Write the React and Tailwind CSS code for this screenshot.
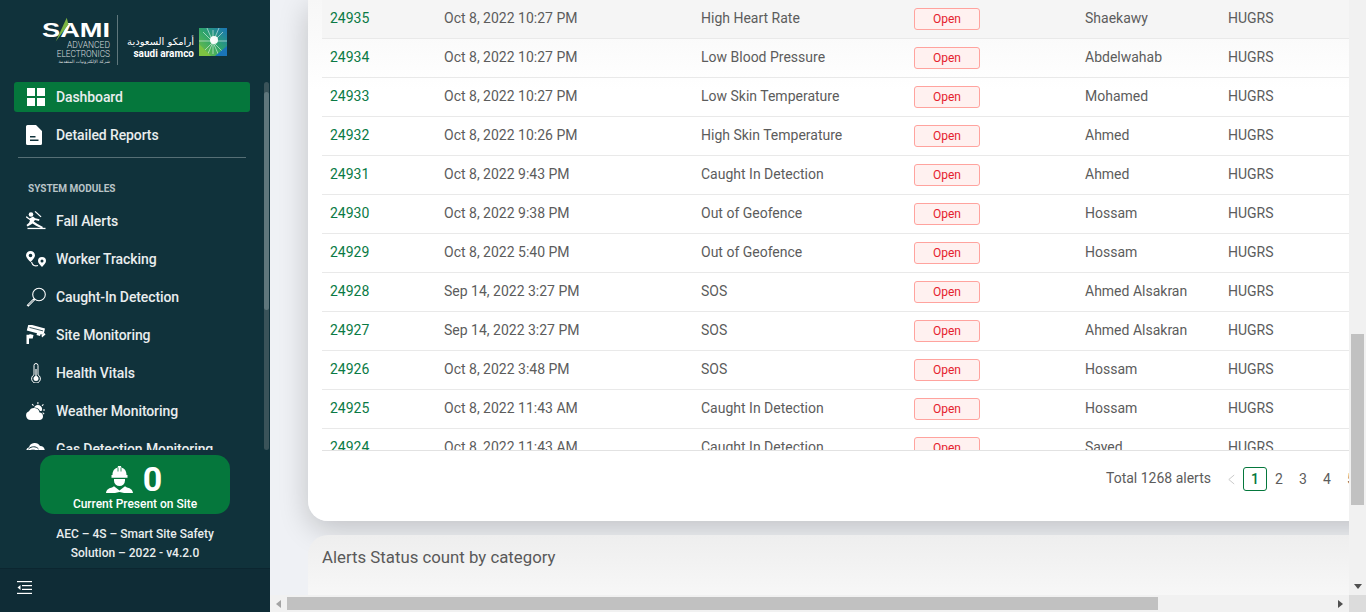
import React from "react";

const rows = [
  ["24935", "Oct 8, 2022 10:27 PM", "High Heart Rate", "Shaekawy"],
  ["24934", "Oct 8, 2022 10:27 PM", "Low Blood Pressure", "Abdelwahab"],
  ["24933", "Oct 8, 2022 10:27 PM", "Low Skin Temperature", "Mohamed"],
  ["24932", "Oct 8, 2022 10:26 PM", "High Skin Temperature", "Ahmed"],
  ["24931", "Oct 8, 2022 9:43 PM", "Caught In Detection", "Ahmed"],
  ["24930", "Oct 8, 2022 9:38 PM", "Out of Geofence", "Hossam"],
  ["24929", "Oct 8, 2022 5:40 PM", "Out of Geofence", "Hossam"],
  ["24928", "Sep 14, 2022 3:27 PM", "SOS", "Ahmed Alsakran"],
  ["24927", "Sep 14, 2022 3:27 PM", "SOS", "Ahmed Alsakran"],
  ["24926", "Oct 8, 2022 3:48 PM", "SOS", "Hossam"],
  ["24925", "Oct 8, 2022 11:43 AM", "Caught In Detection", "Hossam"],
  ["24924", "Oct 8, 2022 11:43 AM", "Caught In Detection", "Sayed"],
];

const Svg = ({ children, className = "w-5 h-5" }) => (
  <svg viewBox="0 0 20 20" className={className} fill="none" stroke="none">{children}</svg>
);

const IconDash = () => (
  <Svg><g fill="#fff"><rect x="1" y="1" width="8" height="8" /><rect x="11" y="1" width="8" height="8" /><rect x="1" y="11" width="8" height="8" /><rect x="11" y="11" width="8" height="8" /></g></Svg>
);
const IconFile = () => (
  <Svg><path fill="#fff" fillRule="evenodd" d="M1.500 0H10l6 6v12.500a1.500 1.500 0 0 1-1.500 1.500h-13A1.500 1.500 0 0 1 0 18.500V1.500A1.500 1.500 0 0 1 1.500 0ZM4 11v1.500h5.500V11ZM4 14.500V16h8.500v-1.500Z" /></Svg>
);
const IconFall = () => (
  <Svg>
    <g fill="#fff">
      <circle cx="5" cy="3.500" r="2.300" />
      <path d="M.5 5 3.500 7.500l3.500-2 2.200 1.700 4.300 1-.5 1.700-4-.8-1.300 1.400 3.800 2.500 5.500 3-1 1.500-6-2.800-3.500-2.300L5 13.500 1.500 15.500l-1-1.500 2.600-2.200.9-2.500L0 6.500Z" />
      <path d="M9.500 0l6 5.500-.9.800-6-5.500Z" />
      <rect x="1.500" y="16.800" width="18" height="1.300" />
    </g>
  </Svg>
);
const IconRoute = () => (
  <Svg>
    <path stroke="#fff" strokeWidth="1.100" d="M5.500 13c1 3.500 3.500 4.500 6.500 3.500" />
    <path fill="#fff" fillRule="evenodd" d="M4.500 2a4.500 4.500 0 0 1 4.500 4.500c0 2-2.500 4.700-4.500 6.500C2.500 11.200 0 8.500 0 6.500A4.500 4.500 0 0 1 4.500 2Zm0 2.700a1.800 1.800 0 1 0 0 3.600 1.800 1.800 0 0 0 0-3.600ZM16 8a4 4 0 0 1 4 4c0 1.800-2.200 4.300-4 6-1.800-1.700-4-4.200-4-6a4 4 0 0 1 4-4Zm0 2.500a1.500 1.500 0 1 0 0 3 1.500 1.500 0 0 0 0-3Z" />
  </Svg>
);
const IconGlass = () => (
  <Svg>
    <circle cx="13" cy="7.500" r="6.300" stroke="#fff" strokeWidth="1.100" />
    <path d="M8.500 12 1.500 19" stroke="#fff" strokeWidth="2.400" />
    <path d="M7.500 13 2.500 18" stroke="#10323b" strokeWidth=".7" />
  </Svg>
);
const IconCam = () => (
  <Svg>
    <g fill="#fff">
      <path d="M2.500-1 19 3.500l-1.500 6.500-3-.8-.5 1.800-3.500-1 .5-1.800L.8 5.500Z" />
      <path d="M15.500 10.500 18.500 8l1 1.500-3.500 3ZM3.500 9l4 1.100-.8 3.400H3V19H.5V9.800H3.500Z" />
    </g>
    <path d="M3.500 2.400l13.500 3.500" stroke="#10323b" strokeWidth=".8" />
  </Svg>
);
const IconTherm = () => (
  <Svg>
    <path stroke="#fff" strokeWidth="1" d="M8 11.800V2.500a2 2 0 0 1 4 0v9.300a4.400 4.400 0 1 1-4 0Z" />
    <circle cx="10" cy="15.600" r="2.500" fill="#fff" />
    <rect x="9.400" y="6" width="1.200" height="8" fill="#fff" />
  </Svg>
);
const IconWeather = () => (
  <Svg>
    <g fill="#fff">
      <path d="M4.500 19A4.500 4.500 0 0 1 3 10.300 5.500 5.500 0 0 1 13.500 11.500a3.800 3.800 0 0 1 .5 7.500Z" />
      <path d="M8 6.600A4.200 4.200 0 0 1 15.800 9.800c-.5.300-1.200.3-1.800.1A6.800 6.800 0 0 0 8 6.600Z" />
      <path d="M11.400 1h1v2.200h-1ZM5.700 3.500l.8-.7 1.400 1.500-.7.800ZM17 3l.8.700-1.500 1.500-.7-.7ZM16.900 8.400H19v1h-2.100ZM16.300 12l.7-.7 1.500 1.400-.7.700Z" />
    </g>
  </Svg>
);
const IconGas = () => (
  <Svg>
    <g fill="#fff">
      <path d="M4.500 17A4.500 4.500 0 0 1 3 8.300 6 6 0 0 1 14 7a4.600 4.600 0 0 1 1.500 9Z" />
    </g>
    <path d="M2.500 10c3-3 7.500-3 10 0M1.500 13c3-2.500 8-2.500 11 0" stroke="#10323b" strokeWidth="1" />
  </Svg>
);
const IconWorker = () => (
  <svg viewBox="0 0 27 27" className="w-[27px] h-[27px]">
    <g fill="#fff">
      <path d="M12 0h3l.3 1.600c3.400.8 5.200 3.700 5.200 7.400h1v2.800H5.500V9h1c0-3.700 1.800-6.600 5.200-7.400Z" />
      <path d="M8 13h11v1.500a5.500 5.500 0 0 1-11 0Z" />
      <path d="M0 27c.4-3.500 3-4.700 6.500-5.700l1.500-1 5.500 4.200 5.500-4.200 1.500 1c3.500 1 6.100 2.200 6.500 5.700H18l-4.500-.9L9 27Z" />
    </g>
    <path d="M12 1.500v4M15 1.500v4" stroke="#05773c" strokeWidth=".8" />
  </svg>
);
const IconToggle = () => (
  <svg viewBox="0 0 15 13" className="w-[15px] h-[13px]">
    <g fill="#fff">
      <rect x="0" y="0" width="15" height="1.200" />
      <rect x="0" y="11.800" width="15" height="1.200" />
      <rect x="5" y="4" width="10" height="1.200" />
      <rect x="5" y="7.800" width="10" height="1.200" />
      <path d="M3.500 4v5L.5 6.500Z" />
    </g>
  </svg>
);

const NavItem = ({ icon, label, active }) => (
  <div className={`flex items-center h-[30px] mb-2 mx-[14px] w-[236px] pl-3 rounded-[3px] shrink-0 ${active ? "bg-[#05773c]" : ""}`}>
    <span className="w-5 h-5 flex items-center justify-center shrink-0">{icon}</span>
    <span className="ml-[10px] text-[14px] tracking-[-0.1px] font-medium text-[#e9edee] whitespace-nowrap">{label}</span>
  </div>
);

const Logo = () => (
  <div className="h-[82px] flex items-start pl-[41px] pt-[15px] shrink-0">
    <div className="w-[69px] h-[50px] flex flex-col items-end relative pt-[6px]">
      <div className="text-white font-bold text-[20px] leading-[18px] scale-x-[1.36] origin-right font-['Liberation_Sans',sans-serif]">SAMI</div>
      <svg viewBox="0 0 20 30" className="absolute left-[13px] top-[1px] w-[17px] h-[29px]">
        <path d="M15 0 17 8 2 28Z" fill="#7bb342" />
      </svg>
      <div className="text-[8.500px] leading-[9px] mt-[2px] text-[#d7dddf] font-light whitespace-nowrap">ADVANCED</div>
      <div className="text-[8.300px] leading-[9px] text-[#d7dddf] font-light whitespace-nowrap">ELECTRONICS</div>
      <div className="text-[4.500px] leading-[6px] text-[#d7dddf] font-['DejaVu_Sans',sans-serif] whitespace-nowrap">شركة الإلكترونيات المتقدمة</div>
    </div>
    <div className="w-px h-[50px] bg-[#5f777c] ml-[7px]" />
    <div className="ml-[7px] w-[69px] flex flex-col items-end pt-[20px]">
      <div className="text-white text-[10px] leading-[14px] font-['DejaVu_Sans',sans-serif] whitespace-nowrap">أرامكو السعودية</div>
      <div className="text-white text-[10px] leading-[10px] font-bold whitespace-nowrap">saudi aramco</div>
    </div>
    <svg viewBox="0 0 28 28" className="w-7 h-7 ml-[5px] mt-[13px]">
      <defs>
        <linearGradient id="ar" x1="0" y1="1" x2="1" y2="0">
          <stop offset="0" stopColor="#7cc242" />
          <stop offset=".5" stopColor="#2fa56a" />
          <stop offset="1" stopColor="#1a74b8" />
        </linearGradient>
      </defs>
      <rect width="28" height="28" fill="url(#ar)" />
      <path d="M14 2v24M4 4l20 20M24 4 4 24M0 13h28M8 0l12 28M20 0 8 28" stroke="#fff" strokeWidth=".7" opacity=".75" />
      <circle cx="15" cy="12" r="4" fill="#fff" opacity=".95" />
      <path d="M0 16 12 28H0Z" fill="#7cc242" />
      <path d="M28 18V28H16Z" fill="#1a74b8" />
    </svg>
  </div>
);

const Sidebar = () => (
  <aside className="w-[270px] h-full shrink-0 flex flex-col bg-[#10323b] font-['Roboto',sans-serif]">
    <Logo />
    <div className="h-[368px] flex shrink-0">
      <div className="w-[264px] h-full overflow-hidden">
        <NavItem icon={<IconDash />} label="Dashboard" active />
        <NavItem icon={<IconFile />} label="Detailed Reports" />
        <div className="ml-[18px] w-[228px] h-px bg-[#566f75] mt-[-1px]" />
        <div className="pl-[28px] pt-[24px] pb-[11px] text-[10px] leading-[13px] font-bold text-[#b9c4c7]">SYSTEM MODULES</div>
        <NavItem icon={<IconFall />} label="Fall Alerts" />
        <NavItem icon={<IconRoute />} label="Worker Tracking" />
        <NavItem icon={<IconGlass />} label="Caught-In Detection" />
        <NavItem icon={<IconCam />} label="Site Monitoring" />
        <NavItem icon={<IconTherm />} label="Health Vitals" />
        <NavItem icon={<IconWeather />} label="Weather Monitoring" />
        <NavItem icon={<IconGas />} label="Gas Detection Monitoring" />
      </div>
      <div className="w-[6px] h-full">
        <div className="w-[5px] h-full rounded-[3px] bg-[#3a5359] pt-[10px]">
          <div className="w-full h-[218px] bg-[#5f777c] rounded-[3px]" />
        </div>
      </div>
    </div>
    <div className="flex-1 flex flex-col items-center pt-[5px]">
      <div className="w-[190px] h-[59px] rounded-[14px] bg-[#05773c] flex flex-col items-center text-white">
        <div className="flex items-center h-[41px] pt-[8px] pr-[2px]">
          <IconWorker />
          <span className="ml-[10px] text-[34px] leading-[33px] font-bold">0</span>
        </div>
        <div className="text-[12px] tracking-[-0.02px] leading-[16px] font-medium">Current Present on Site</div>
      </div>
      <div className="mt-[11px] text-[12px] leading-[19px] font-medium text-[#e9edee] text-center">
        <div>AEC – 4S – Smart Site Safety</div>
        <div>Solution – 2022 - v4.2.0</div>
      </div>
    </div>
    <div className="h-[44px] shrink-0 border-t border-[#0c2630] bg-[#0f2c36] flex items-start pt-[12px] pl-[17px]">
      <IconToggle />
    </div>
  </aside>
);

const Row = ({ r, first }) => (
  <div className={`grid grid-cols-[114px_257px_213px_171px_143px_1fr] h-[39px] items-center border-b border-[#e9e9e9] text-[14px] text-[#5c5c5c] ${first ? "bg-[#f5f5f5]" : ""}`}>
    <span className="pl-2 pb-[2px] text-[#0a7a45]">{r[0]}</span>
    <span className="pl-2 pb-[2px]">{r[1]}</span>
    <span className="pl-2 pb-[2px]">{r[2]}</span>
    <span className="pl-2">
      <span className="flex items-center justify-center w-[66px] h-[22px] rounded-[3px] border border-[#ffa39e] bg-[#fff1f0] text-[12px] text-[#e5212d]">Open</span>
    </span>
    <span className="pl-2 pb-[2px]">{r[3]}</span>
    <span className="pl-2 pb-[2px]">HUGRS</span>
  </div>
);

const Pagination = () => (
  <div className="h-[70px] pt-[16px] flex items-start pl-[784px] text-[14px] text-[#5c5c5c] leading-[22px]">
    <span className="whitespace-nowrap h-6 flex items-center -mt-px">Total 1268 alerts</span>
    <span className="ml-[14px] w-[12px] h-6 flex items-center justify-center text-[#c4c4c4]">
      <svg viewBox="0 0 10 12" className="w-[9px] h-[11px]"><path d="M8 1 2 6l6 5" fill="none" stroke="currentColor" strokeWidth="1" /></svg>
    </span>
    <span className="w-6 h-6 ml-[6px] rounded-[3px] border border-[#05773c] text-[#05773c] font-medium flex items-center justify-center">1</span>
    {["2", "3", "4", "5"].map((p) => (
      <span key={p} className="w-6 h-6 flex items-center justify-center shrink-0">{p}</span>
    ))}
  </div>
);

const Main = () => (
  <div className="flex-1 min-w-0 h-full flex flex-col font-['Roboto',sans-serif]">
    <div className="flex-1 min-h-0 flex">
      <div className="w-[1079px] overflow-hidden bg-[#eff1f5]">
        <div className="ml-[38px] w-[1100px] h-[521px] rounded-b-[20px] bg-[linear-gradient(180deg,#f7f7f7,#ffffff_90px)] shadow-[0_8px_30px_rgba(0,0,0,0.2)] pl-[14px] relative">
          <div className="h-[451px] overflow-hidden border-b border-[#e2e2e2]">
            {rows.map((r, i) => <Row key={r[0]} r={r} first={i === 0} />)}
          </div>
          <Pagination />
        </div>
        <div className="ml-[38px] mt-[14px] w-[1100px] h-[100px] rounded-t-[20px] bg-[linear-gradient(180deg,#eeeeee,#f7f7f7_60px)] pl-[14px] pt-[11px] relative">
          <div className="text-[16.800px] leading-[22px] text-[#595959]">Alerts Status count by category</div>
        </div>
      </div>
      <div className="w-[17px] shrink-0 h-full bg-[#f1f1f1] flex flex-col items-center">
        <div className="h-[334px] w-full" />
        <div className="w-[13px] h-[171px] bg-[#c1c1c1]" />
        <div className="flex-1" />
        <svg viewBox="0 0 8 5" className="w-2 h-[5px] mb-[6px]"><path d="M0 0h8L4 5Z" fill="#505050" /></svg>
      </div>
    </div>
    <div className="h-[17px] shrink-0 bg-[#f1f1f1] flex items-center">
      <svg viewBox="0 0 5 8" className="w-[5px] h-2 ml-[6px]"><path d="M5 0v8L0 4Z" fill="#a3a3a3" /></svg>
      <div className="ml-[6px] w-[871px] h-[13px] bg-[#c1c1c1]" />
      <div className="flex-1" />
      <svg viewBox="0 0 5 8" className="w-[5px] h-2 mr-[6px]"><path d="M0 0v8l5-4Z" fill="#505050" /></svg>
      <div className="w-[17px] h-full bg-[#dcdcdc]" />
    </div>
  </div>
);

export default function App() {
  return (
    <div className="w-[1366px] h-[612px] flex overflow-hidden bg-white">
      <Sidebar />
      <Main />
    </div>
  );
}
